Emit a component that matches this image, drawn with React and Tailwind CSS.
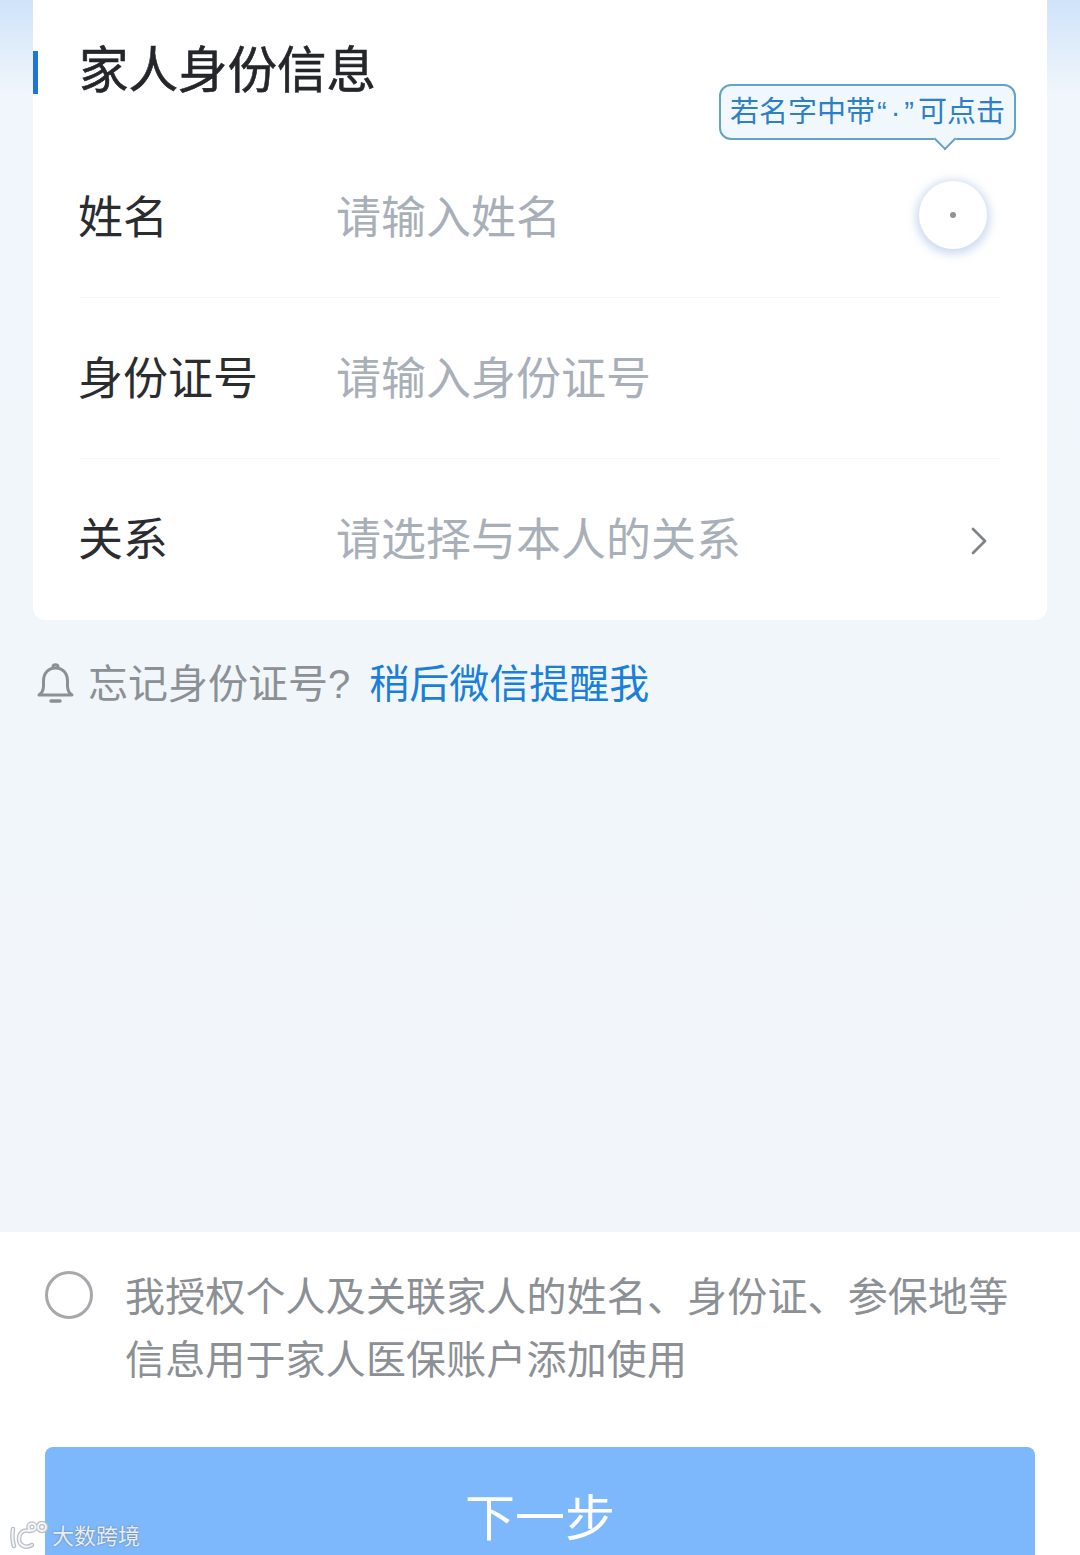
import { ChevronRight } from "lucide-react";

const FONT = "font-['Liberation_Sans','Noto_Sans_CJK_SC',sans-serif]";

const FormRow = ({ label, placeholder, divider, children }) => (
  <div className="flex h-[161px] items-center px-[47px]">
    <div className={`flex h-full flex-1 items-center pt-[2px] ${divider ? "border-b border-[#f5f6f8]" : ""}`}>
      <span className="ml-[-2px] w-[258px] shrink-0 text-[45px] leading-none text-[#2a2c30]">{label}</span>
      <span className="flex-1 text-[45px] leading-none text-[#a9afb8]">{placeholder}</span>
      {children}
    </div>
  </div>
);

const BellIcon = () => (
  <svg width="40" height="44" viewBox="0 0 40 44" fill="none" stroke="#8c9095" strokeWidth="3" strokeLinejoin="round" strokeLinecap="round">
    <path d="M3 33c3-2 4.500-5 4.500-9v-5C7.500 11 12.500 6 19.500 6s12 5 12 13v5c0 4 1.500 7 4.500 9z" />
    <path d="M17 5c0-3 5-3 5 0" />
    <path d="M15 39h9" strokeWidth="3.500" />
  </svg>
);

const LOGO_STROKES = (
  <>
    <path d="M4 8c-1 6-1 11 1 17" />
    <path d="M21 10c-7-2-11 2-11 8 0 6 6 10 13 6" />
    <circle cx="23" cy="6" r="3.500" />
    <circle cx="33" cy="6" r="4" />
  </>
);

const WatermarkLogo = () => (
  <svg width="40" height="30" viewBox="0 0 40 30" fill="none" strokeLinecap="round">
    <g stroke="#b9bfc7" strokeWidth="4.500">{LOGO_STROKES}</g>
    <g stroke="#f4f5f7" strokeWidth="2">{LOGO_STROKES}</g>
  </svg>
);

export default function App() {
  return (
    <div className={`${FONT} relative flex h-[1555px] w-[1080px] flex-col overflow-hidden bg-[#f2f6fb]`}>
      <div className="flex-1 bg-gradient-to-b from-[#cfe3fa] via-[#f0f6fb] via-[7.500%] to-[#f2f6fb]">
        {/* form card */}
        <div className="relative mx-[33px] h-[620px] rounded-b-xl bg-white">
          <div className="flex h-[137px] items-start pt-[51px]">
            <div className="h-[43px] w-[5px] bg-[#1f74d8]" />
            <h1 className="ml-[41px] whitespace-nowrap text-[49.500px] leading-[39px] font-normal text-[#24262a] [-webkit-text-stroke:0.6px_#24262a]">
              家人身份信息
            </h1>
          </div>
          <FormRow label="姓名" placeholder="请输入姓名" divider>
            <div className="mt-[-6px] mr-[13px] flex h-[68px] w-[68px] items-center justify-center rounded-full bg-white shadow-[0_2px_10px_3px_rgba(190,208,235,0.8)]">
              <div className="h-[6px] w-[6px] rounded-full bg-[#8f9398]" />
            </div>
          </FormRow>
          <FormRow label="身份证号" placeholder="请输入身份证号" divider />
          <FormRow label="关系" placeholder="请选择与本人的关系">
            <ChevronRight size={48} strokeWidth={1.400} className="mr-[-3px] text-[#7f8489]" />
          </FormRow>

          {/* hint bubble over the name row */}
          <div className="absolute top-[84px] left-[686px] flex h-[56px] w-[297px] items-center justify-center rounded-xl border-2 border-[#63a3c8] bg-[#f0f8fe] pt-[1px] text-[29px] leading-none whitespace-nowrap text-[#2d7fc8]">
            若名字中带<span className="pl-[2px] tracking-[4px]">“·”</span>可点击
            <div className="absolute -bottom-[9px] left-[216px] h-4 w-4 rotate-45 border-r-2 border-b-2 border-[#63a3c8] bg-[#f0f8fe]" />
          </div>
        </div>

        <div className="mt-[40px] flex h-[48px] items-center pl-[36px] text-[40px] leading-none">
          <BellIcon />
          <span className="ml-[12px] text-[#8c9095]">忘记身份证号?</span>
          <span className="ml-[19px] text-[#1a7fd8]">稍后微信提醒我</span>
        </div>
      </div>

      {/* bottom consent and action */}
      <div className="h-[323px] shrink-0 bg-white px-[45px] pt-[33px]">
        <div className="flex items-start">
          <div className="mt-[6px] h-[48px] w-[48px] shrink-0 rounded-full border-[3px] border-[#a6a8ab]" />
          <p className="mt-[1px] ml-[32px] w-[892px] text-[40px] leading-[63px] tracking-[0.15px] text-[#8c9095]">
            我授权个人及关联家人的姓名、身份证、参保地等信息用于家人医保账户添加使用
          </p>
        </div>
        <button className="mt-[55px] h-[140px] w-[990px] rounded-t-lg bg-[#7db8fd] pt-[3px] text-[50px] leading-none text-white">
          下一步
        </button>
      </div>

      {/* watermark over the button corner */}
      <div className="absolute top-[1521px] left-[9px] flex items-center gap-[3px]">
        <WatermarkLogo />
        <span className="mt-[2px] text-[22px] leading-none text-[#e6edf6] [text-shadow:0_0_2px_#5f7286]">大数跨境</span>
      </div>
    </div>
  );
}
